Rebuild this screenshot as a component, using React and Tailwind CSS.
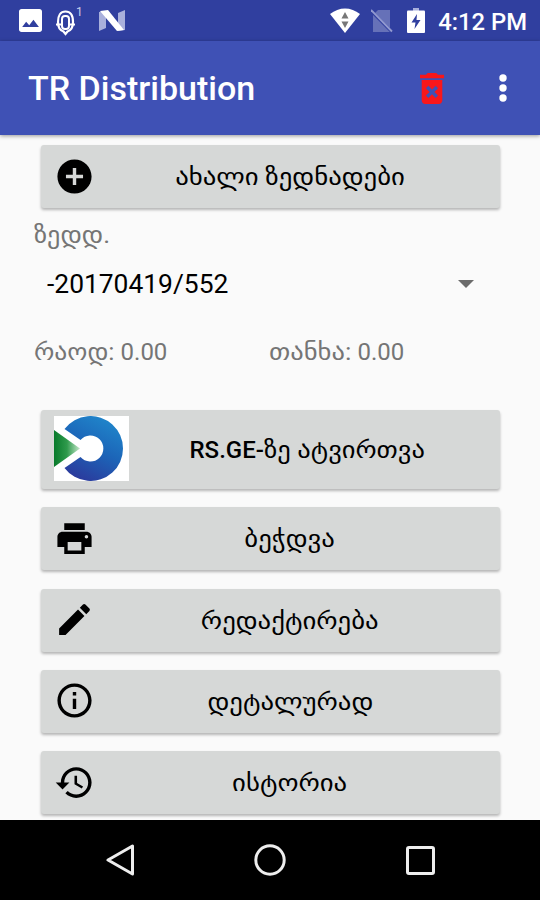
import React from "react";

const ICONS = {
  add: "M12 2C6.48 2 2 6.48 2 12s4.48 10 10 10 10-4.48 10-10S17.52 2 12 2zm5 11h-4v4h-2v-4H7v-2h4V7h2v4h4v2z",
  print:
    "M19 8H5c-1.66 0-3 1.34-3 3v6h4v4h12v-4h4v-6c0-1.66-1.34-3-3-3zm-3 11H8v-5h8v5zm3-7c-.55 0-1-.45-1-1s.45-1 1-1 1 .45 1 1-.45 1-1 1zm-1-9H6v4h12V3z",
  edit: "M3 17.25V21h3.75L17.81 9.94l-3.75-3.75L3 17.25zM20.71 7.04c.39-.39.39-1.02 0-1.41l-2.34-2.34c-.39-.39-1.02-.39-1.41 0l-1.83 1.83 3.75 3.75 1.83-1.83z",
  info: "M11 17h2v-6h-2v6zm1-15C6.48 2 2 6.48 2 12s4.48 10 10 10 10-4.48 10-10S17.52 2 12 2zm0 18c-4.41 0-8-3.59-8-8s3.59-8 8-8 8 3.59 8 8-3.59 8-8 8zM11 9h2V7h-2v2z",
  history:
    "M13 3c-4.97 0-9 4.03-9 9H1l3.89 3.89.07.14L9 12H6c0-3.87 3.13-7 7-7s7 3.13 7 7-3.13 7-7 7c-1.93 0-3.68-.79-4.94-2.06l-1.42 1.42C8.27 19.99 10.51 21 13 21c4.97 0 9-4.03 9-9s-4.03-9-9-9zm-1 5v5l4.28 2.54.72-1.21-3.5-2.08V8H12z",
};

function Icon({ name }) {
  return (
    <svg viewBox="0 0 24 24" className="mb-px size-[41px] shrink-0" fill="#000">
      <path d={ICONS[name]} />
    </svg>
  );
}

function ActionButton({ icon, className = "h-[63px]", label, children }) {
  return (
    <button
      className={`flex w-full shrink-0 items-center rounded-[3px] bg-[#d6d8d7] pr-[15px] pl-[13px] text-black shadow-[0_2px_3px_rgba(0,0,0,0.28)] ${className}`}
    >
      {icon}
      <span className="flex-1 pt-px text-center text-[24px] leading-[30px] whitespace-nowrap">
        {label ? <span className="inline-block scale-x-[1.115]">{label}</span> : children}
      </span>
    </button>
  );
}

function RsLogo() {
  return (
    <svg viewBox="0 0 75 65" className="mb-[2px] h-[65px] w-[75px] shrink-0">
      <defs>
        <linearGradient id="ring" x1="0.75" y1="0" x2="0.3" y2="1">
          <stop offset="0" stopColor="#2088cc" />
          <stop offset="0.5" stopColor="#1c65b8" />
          <stop offset="1" stopColor="#2b3a9c" />
        </linearGradient>
        <linearGradient id="leaf" x1="0" y1="0" x2="1" y2="0">
          <stop offset="0" stopColor="#087a2b" />
          <stop offset="0.5" stopColor="#2f9a4c" />
          <stop offset="1" stopColor="#c5e8ca" />
        </linearGradient>
      </defs>
      <rect width="75" height="65" fill="#fff" />
      <path d="M10.500 13A32.500 32.500 0 1 1 10.500 52L26.500 41A13 13 0 1 0 26.500 24Z" fill="url(#ring)" />
      <path d="M0 14L26 32.500L0 51Z" fill="url(#leaf)" />
    </svg>
  );
}

function StatusBar() {
  return (
    <header className="flex h-[41px] shrink-0 items-center bg-[#303f9f] pr-[13px] pl-[19px] text-white">
      <svg viewBox="3 3 18 18" className="size-[23px]" fill="#fff">
        <path d="M21 19V5c0-1.1-.9-2-2-2H5c-1.1 0-2 .9-2 2v14c0 1.1.9 2 2 2h14c1.1 0 2-.9 2-2zM5.5 17l3.1-4 2.4 2.7 3.3-4.2 4.3 5.5z" />
      </svg>
      <svg viewBox="0 0 19 26" className="mt-[4px] ml-[14px] h-[26px] w-[19px]" fill="none" stroke="#fff">
        <path d="M9.500 1.500C4.500 1.500 2 5.500 2 12C2 17 4.500 20.500 7.500 21.500L9.500 24L11.500 21.500C14.500 20.500 17 17 17 12C17 5.500 14.500 1.500 9.500 1.500Z" strokeWidth="2.200" />
        <rect x="6" y="6" width="7" height="13" rx="3" strokeWidth="2" />
        <path d="M0 14.500H5.500M13.500 14.500H19" strokeWidth="2" />
      </svg>
      <span className="mb-[17px] ml-px w-[7px] text-[12px] leading-none text-[#c9cdea]">1</span>
      <svg viewBox="0 0 26 22" className="ml-[16px] h-[22px] w-[26px]">
        <path d="M0 2L7 1V18L0 21Z" fill="#a9b0dc" />
        <path d="M19 3L26 0V20L19 21Z" fill="#a9b0dc" />
        <path d="M1 1L9 0L25 20L18 21Z" fill="#fff" />
      </svg>
      <div className="ml-auto flex items-center">
        <svg viewBox="0 0 30 25" className="h-[25px] w-[30px]">
          <path d="M0 6C9-1.500 21-1.500 30 6L15 25Z" fill="#fff" />
          <path d="M11.500 10.500L15 4L18.500 10.500ZM11.500 13.500H18.500L15 20Z" fill="#777" />
        </svg>
        <svg viewBox="0 0 22 24" className="ml-[11px] h-[24px] w-[22px]">
          <path d="M7 1H19V23H2V6Z" fill="#6671b8" />
          <path d="M0 2L21 23" stroke="#303f9f" strokeWidth="3" />
          <path d="M0 1L21 22.500" stroke="#929ad0" strokeWidth="1.800" />
        </svg>
        <svg viewBox="0 0 18 25" className="ml-[14px] h-[25px] w-[18px]">
          <path d="M6 0H12V3H6Z" fill="#a9b0dc" />
          <path d="M1 2.500H17Q18 2.500 18 3.500V24Q18 25 17 25H1Q0 25 0 24V3.500Q0 2.500 1 2.500Z" fill="#fff" />
          <path d="M10 6L4.500 14.500H8.500L7.500 21L13.500 12H9.500Z" fill="#303f9f" />
        </svg>
        <span className="ml-[13px] pt-[2px] text-[23.800px] leading-[30px] font-medium whitespace-nowrap">4:12 PM</span>
      </div>
    </header>
  );
}

export default function App() {
  return (
    <div className="flex h-[900px] w-[540px] flex-col overflow-hidden bg-[#fafafa] font-[Roboto,'DejaVu_Sans',sans-serif]">
      <StatusBar />
      <div className="z-10 flex h-[94px] shrink-0 items-center bg-[#3f51b5] pr-[33px] pl-[28px] text-white shadow-[0_1px_4px_rgba(0,0,0,0.4)]">
        <h1 className="pt-px text-[34px] font-medium whitespace-nowrap">TR Distribution</h1>
        <svg viewBox="5 3 14 18" preserveAspectRatio="none" className="ml-auto h-[31px] w-[24px]" fill="#f8171b">
          <path
            fillRule="evenodd"
            d="M6 19c0 1.100.9 2 2 2h8c1.100 0 2-.9 2-2V7H6v12zm2.460-7.120l1.410-1.410L12 12.590l2.120-2.120 1.410 1.410L13.410 14l2.120 2.120-1.410 1.410L12 15.410l-2.120 2.120-1.410-1.410L10.590 14l-2.130-2.120zM15.500 4l-1-1h-5l-1 1H5v2h14V4z"
          />
        </svg>
        <svg viewBox="0 0 8 28" className="ml-[55px] h-[28px] w-[8px]" fill="#fff">
          <circle cx="4" cy="4" r="3.700" />
          <circle cx="4" cy="14" r="3.700" />
          <circle cx="4" cy="24" r="3.700" />
        </svg>
      </div>

      <main className="flex h-[685px] shrink-0 flex-col overflow-hidden pt-[10px] pr-[40px] pl-[41px]">
        <ActionButton icon={<Icon name="add" />} label="ახალი ზედნადები" />
        <div className="mt-[12px] -ml-[7px] h-[30px] text-[24px] leading-[30px] text-[#757575]">
          <span className="inline-block origin-left scale-x-[1.090]">ზედდ.</span>
        </div>
        <div className="mt-[18px] flex h-[32px] items-center pr-[26px] pl-[6px]">
          <span className="text-[26.400px] leading-[32px] text-black">-20170419/552</span>
          <svg viewBox="0 0 16 8" className="ml-auto h-[8px] w-[16px]" fill="#6b6b6b">
            <path d="M0 0H16L8 8Z" />
          </svg>
        </div>
        <div className="mt-[36px] -ml-[7px] flex h-[32px] text-[24px] leading-[32px] whitespace-nowrap text-[#757575]">
          <span className="w-[235px]">
            <span className="mr-[5px] inline-block origin-left scale-x-[1.065]">რაოდ:</span> 0.00
          </span>
          <span>
            <span className="mr-[8px] inline-block origin-left scale-x-[1.105]">თანხა:</span> 0.00
          </span>
        </div>
        <div className="mt-[42px] flex flex-col gap-[18.250px]">
          <ActionButton icon={<RsLogo />} className="h-[79px]">
            <span className="font-medium">RS.GE-</span>
            <span className="mr-[15px] inline-block origin-left scale-x-[1.105]">ზე ატვირთვა</span>
          </ActionButton>
          <ActionButton icon={<Icon name="print" />} label="ბეჭდვა" />
          <ActionButton icon={<Icon name="edit" />} label="რედაქტირება" />
          <ActionButton icon={<Icon name="info" />} label="დეტალურად" />
          <ActionButton icon={<Icon name="history" />} label="ისტორია" />
        </div>
      </main>

      <nav className="flex h-[80px] shrink-0 items-center justify-between bg-black pr-[105px] pl-[106px]">
        <svg viewBox="0 0 28 32" className="h-[32px] w-[28px]" fill="none" stroke="#eee" strokeWidth="3" strokeLinejoin="round">
          <path d="M2 16L26.500 2V30Z" />
        </svg>
        <svg viewBox="0 0 32 32" className="size-[32px]" fill="none" stroke="#eee" strokeWidth="3">
          <circle cx="16" cy="16" r="14.200" />
        </svg>
        <svg viewBox="0 0 29 29" className="size-[29px]" fill="none" stroke="#eee" strokeWidth="3">
          <rect x="1.500" y="1.500" width="26" height="26" rx="1.500" />
        </svg>
      </nav>
    </div>
  );
}
